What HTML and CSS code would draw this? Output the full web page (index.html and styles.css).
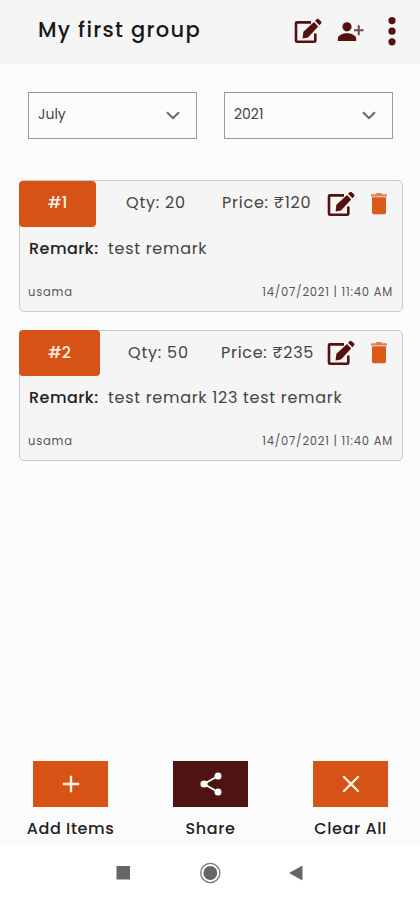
FILE: index.html
```html
<!DOCTYPE html>
<html lang="en">
<head>
<meta charset="utf-8">
<meta name="viewport" content="width=device-width, initial-scale=1">
<title>My first group</title>
<link rel="stylesheet" href="styles.css">
</head>
<body>
<svg class="defs" width="0" height="0" aria-hidden="true">
  <symbol id="edit" viewBox="0 0 28 26">
    <path d="M17 4.4H2.9Q2 4.4 2 5.3V22.7Q2 23.8 3.1 23.8H20.2Q21.3 23.8 21.3 22.7V15.5" fill="none" stroke="currentColor" stroke-width="2.6"/>
    <path d="M8.6 20.4 9.4 13.8 20 4 24.2 8.4 14 19.4Z" fill="currentColor"/>
    <path d="M21 2.7 22.6 1.2Q23.8.3 25 1.4L26.9 3.3Q28 4.5 26.9 5.7L25.4 7.2Z" fill="currentColor"/>
  </symbol>
  <symbol id="trash" viewBox="0 0 18 24">
    <path d="M1 2.2H5.6L6.8 1H11.2L12.4 2.2H17V4.4H1Z" fill="currentColor" opacity=".75"/>
    <path d="M2 5.2H16V20.5Q16 22.3 14.2 22.3H3.8Q2 22.3 2 20.5Z" fill="currentColor"/>
  </symbol>
  <symbol id="chevron" viewBox="0 0 14 9">
    <path d="M1 1.3 7 7.2 13 1.3" fill="none" stroke="currentColor" stroke-width="2"/>
  </symbol>
</svg>
<div class="screen">
  <header class="topbar">
    <h1 class="title">My first group</h1>
    <svg class="top-edit"><use href="#edit"/></svg>
    <svg class="top-person" viewBox="0 0 27 20">
      <circle cx="10" cy="4.8" r="4.6" fill="currentColor"/>
      <path d="M.8 19V16.6C.8 13.3 6 11.3 10 11.3S19.2 13.3 19.2 16.6V19Z" fill="currentColor"/>
      <path d="M21.7 3.3V13.3M17 8.3H26.6" stroke="#6b4644" stroke-width="2" fill="none"/>
    </svg>
    <svg class="top-more" viewBox="0 0 8 30">
      <circle cx="4" cy="4.6" r="3.6"/><circle cx="4" cy="15.2" r="3.6"/><circle cx="4" cy="25.8" r="3.6"/>
    </svg>
  </header>
  <main class="content">
    <div class="filters">
      <div class="select"><span class="month">July</span><svg class="chevron"><use href="#chevron"/></svg></div>
      <div class="select"><span class="year">2021</span><svg class="chevron"><use href="#chevron"/></svg></div>
    </div>
    <article class="card first">
      <div class="card-head">
        <span class="badge">#1</span><span class="qty">Qty: 20</span><span class="price">Price: ₹120</span>
        <svg class="card-edit"><use href="#edit"/></svg><svg class="card-trash"><use href="#trash"/></svg>
      </div>
      <p class="remark"><span class="remark-label">Remark:</span><span class="remark-text">test remark</span></p>
      <div class="meta"><span class="author">usama</span><span class="date">14/07/2021 | 11:40 AM</span></div>
    </article>
    <article class="card second">
      <div class="card-head">
        <span class="badge">#2</span><span class="qty">Qty: 50</span><span class="price">Price: ₹235</span>
        <svg class="card-edit"><use href="#edit"/></svg><svg class="card-trash"><use href="#trash"/></svg>
      </div>
      <p class="remark"><span class="remark-label">Remark:</span><span class="remark-text">test remark 123 test remark</span></p>
      <div class="meta"><span class="author">usama</span><span class="date">14/07/2021 | 11:40 AM</span></div>
    </article>
  </main>
  <div class="actions">
    <div class="action">
      <div class="tile"><svg class="glyph" viewBox="0 0 24 24"><path d="M12 3.8V20.2M3.8 12H20.2" stroke="#fff2e4" stroke-width="2.4"/></svg></div>
      <span class="label">Add Items</span>
    </div>
    <div class="action">
      <div class="tile dark"><svg class="glyph" viewBox="0 0 24 24"><path d="M19 4 5 12 19 20" fill="none" stroke="#fff" stroke-width="2"/><g fill="#fff"><circle cx="19" cy="4" r="3.5"/><circle cx="5" cy="12" r="3.6"/><circle cx="19" cy="20" r="3.5"/></g></svg></div>
      <span class="label">Share</span>
    </div>
    <div class="action">
      <div class="tile"><svg class="glyph" viewBox="0 0 24 24"><path d="M5 5 19 19M19 5 5 19" stroke="#fff2e4" stroke-width="2.4" stroke-linecap="round"/></svg></div>
      <span class="label">Clear All</span>
    </div>
  </div>
  <nav class="system">
    <svg class="system-icons" viewBox="0 0 420 54" fill="#666">
      <path d="M116.5 20H130V33.5H116.5Z"/>
      <circle cx="210.3" cy="27" r="9.6" fill="none" stroke="#777" stroke-width="1.3"/>
      <circle cx="210.3" cy="27" r="6.9"/>
      <path d="M289 27 302.5 19.5V34.5Z"/>
    </svg>
  </nav>
</div>
</body>
</html>
```
FILE: styles.css
```css
* { box-sizing: border-box; }
body {
  margin: 0;
  background: #fbfbfb;
  font-family: Poppins, Inter, "Noto Sans", sans-serif;
  color: #444;
}
svg { display: block; flex: none; }
span, h1 { white-space: nowrap; }
.defs { position: absolute; }
.screen { width: 420px; height: 900px; display: flex; flex-direction: column; overflow: hidden; }

.topbar { height: 64px; flex: none; background: #f5f5f5; color: #55110e; display: flex; align-items: flex-start; padding-left: 38px; }
.title { margin: 16px 0 0; width: 256px; font-size: 21px; line-height: 28px; font-weight: 500; letter-spacing: 1.3px; color: #171717; }
.top-edit { width: 28px; height: 26px; margin-top: 18px; }
.top-person { width: 27px; height: 20px; margin: 22px 0 0 15px; }
.top-more { width: 8px; height: 30px; margin: 16px 0 0 24px; fill: currentColor; }

.content { flex: 1; padding: 28px 17px 0 19px; }
.filters { display: flex; gap: 27px; padding-left: 9px; }
.select { width: 169px; height: 47px; border: 1px solid #999; display: flex; justify-content: space-between; padding: 0 16px 0 9px; }
.month, .year { font-size: 14px; line-height: 43px; }
.chevron { width: 14px; height: 9px; margin-top: 18px; color: #666; }

.card { height: 132px; margin-top: 41px; border: 1px solid #c9c9c9; border-radius: 5px; background: #f5f5f5; }
.card.second { height: 131px; margin-top: 18px; }
.card-head { width: 382px; display: grid; grid-template-columns: 76px 107px 119px 28px 18px; }
.card.second .card-head { grid-template-columns: 80px 101px 121px 28px 18px; }
.card-head > span { font-size: 16px; line-height: 22px; padding-top: 11px; }
.card-head .badge { height: 46px; margin-left: -1px; border-radius: 4px; background: #d65215; color: #fff1e5; text-align: center; font-weight: 500; }
.card.second .badge { padding-top: 12px; margin-top: -1px; }
.qty { padding-left: 30px; letter-spacing: .8px; }
.card.second .qty { padding-left: 28px; }
.price { padding-left: 19px; letter-spacing: .75px; }
.card.second .price { padding-left: 20px; letter-spacing: .7px; }
.card-edit { width: 28px; height: 26px; margin: 10px 0 0 5px; color: #55110e; }
.card-trash { width: 18px; height: 24px; margin: 11px 0 0 20px; color: #dc5a18; }
.card.second .card-edit { margin-top: 9px; }
.card.second .card-trash { margin-top: 10px; }
.remark { display: flex; margin: 10px 0 0 9px; font-size: 16px; line-height: 23px; }
.remark-label { width: 79px; color: #222; font-weight: 500; letter-spacing: .45px; }
.remark-text { letter-spacing: .7px; }
.meta { display: flex; justify-content: space-between; margin: 24px 9px 0 8px; font-size: 11.5px; line-height: 16px; color: #555; letter-spacing: .8px; }

.actions { height: 85px; flex: none; display: flex; }
.action { width: 140px; display: flex; flex-direction: column; align-items: center; padding-left: 1px; }
.tile { width: 75px; height: 46px; background: #d65215; display: flex; align-items: center; justify-content: center; }
.tile.dark { background: #4f1411; }
.glyph { width: 24px; height: 24px; }
.label { margin-top: 10px; font-size: 16px; line-height: 24px; font-weight: 500; color: #222; letter-spacing: .6px; }
.system { height: 54px; flex: none; background: #fff; }
.system-icons { width: 420px; height: 54px; }
```
